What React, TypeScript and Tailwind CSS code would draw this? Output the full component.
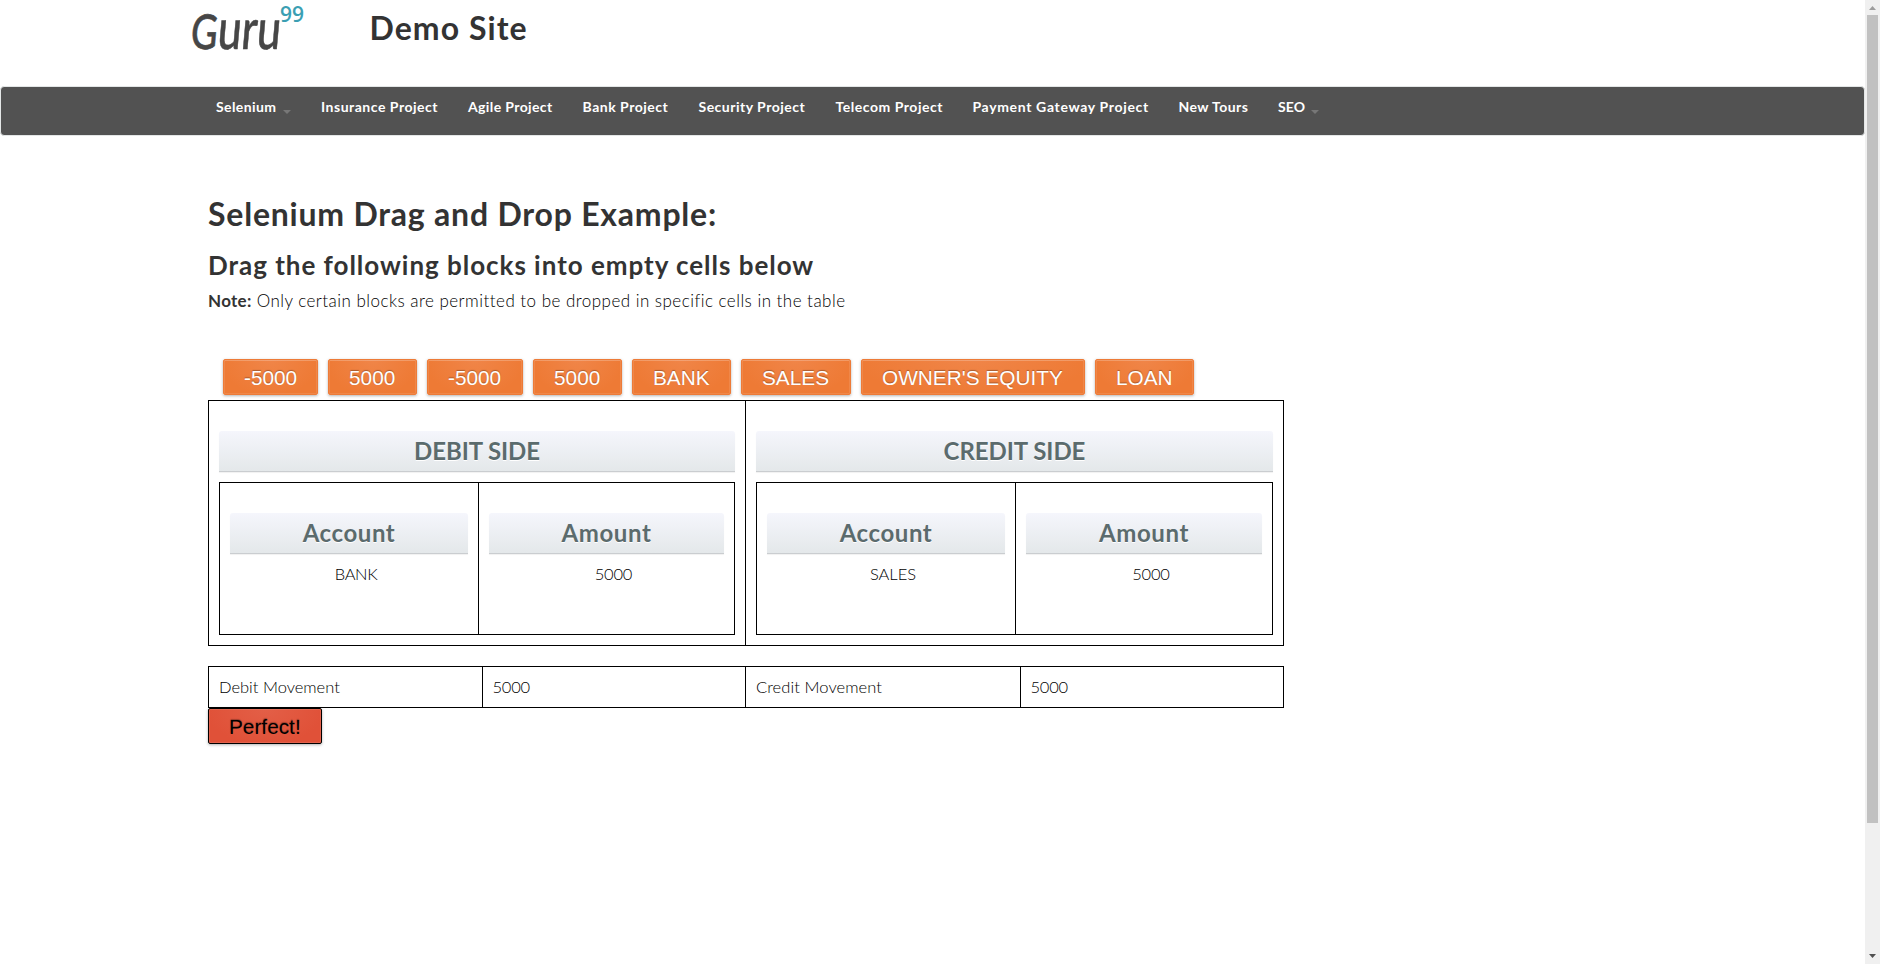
const navItems = [
  { label: "Selenium", box: "w-[75px] tracking-[0.41px]", menu: true },
  { label: "Insurance Project", box: "w-[117px] tracking-[0.52px]" },
  { label: "Agile Project", box: "w-[84.5px] tracking-[0.38px]" },
  { label: "Bank Project", box: "w-[86px] tracking-[0.52px]" },
  { label: "Security Project", box: "w-[107px] tracking-[0.49px]" },
  { label: "Telecom Project", box: "w-[107px] tracking-[0.53px]" },
  { label: "Payment Gateway Project", box: "w-[176px] tracking-[0.66px]" },
  { label: "New Tours", box: "w-[69.5px] tracking-[0.43px]" },
  { label: "SEO", box: "w-[41px] tracking-[0.1px]", menu: true },
];

const blocks = [
  { label: "-5000", width: "w-[95px]" },
  { label: "5000", width: "w-[89px]" },
  { label: "-5000", width: "w-[96px]" },
  { label: "5000", width: "w-[89px]" },
  { label: "BANK", width: "w-[99px]" },
  { label: "SALES", width: "w-[110px]" },
  { label: "OWNER'S EQUITY", width: "w-[224px]" },
  { label: "LOAN", width: "w-[99px]" },
];

function Caret() {
  return (
    <svg className="mt-[13px] shrink-0" width="8" height="4" viewBox="0 0 8 4">
      <path d="M0 0H8L4 4Z" fill="#777" />
    </svg>
  );
}

function Logo() {
  return (
    <svg width="136" height="80" viewBox="0 0 136 80" className="overflow-visible">
      <text
        transform="translate(0 48.5) skewX(-5) scale(0.76 1)"
        x="13"
        fill="#464646"
        stroke="#464646"
        strokeWidth="0.6"
        strokeLinejoin="round"
        fontFamily="Lato"
        fontWeight="500"
        fontSize="48"
      >
        G<tspan fontSize="56">uru</tspan>
      </text>
      <text x="100" y="22" fontSize="21" fontWeight="600" fontFamily="Open Sans" fill="#3b9fb3" textLength="24" lengthAdjust="spacingAndGlyphs">
        99
      </text>
    </svg>
  );
}

function Band({ children, tracking }: { children: string; tracking: string }) {
  return (
    <h3
      className={`h-[41px] rounded-t-[3px] border-b border-[#cacdd0] bg-linear-to-b from-[#f5f6fc] to-[#e4e8ea] text-center text-[24px] leading-[40px] font-bold text-[#5b6b6d] shadow-[0_1px_1px_rgba(0,0,0,0.06)] [text-shadow:0_1px_0_#fff] ${tracking}`}
    >
      {children}
    </h3>
  );
}

function Column({ title, tracking, value, valueTracking }: { title: string; tracking: string; value: string; valueTracking: string }) {
  return (
    <div className="px-[10px] pt-[30px]">
      <Band tracking={tracking}>{title}</Band>
      <div className={`mt-[10px] pl-[14px] text-center text-[16.5px] leading-5 font-light text-black ${valueTracking}`}>{value}</div>
    </div>
  );
}

function Side({ title, tracking, account, accountTracking, grid }: { title: string; tracking: string; account: string; accountTracking: string; grid: string }) {
  return (
    <div className="px-[10px] pt-[30px] pb-[10px]">
      <Band tracking={tracking}>{title}</Band>
      <div className={`mt-[10px] grid h-[153px] divide-x divide-black border border-black ${grid}`}>
        <Column title="Account" tracking="tracking-[0.56px]" value={account} valueTracking={accountTracking} />
        <Column title="Amount" tracking="tracking-[0.63px]" value="5000" valueTracking="tracking-[-0.2px]" />
      </div>
    </div>
  );
}

function Scrollbar() {
  return (
    <div className="flex h-full w-[15px] shrink-0 flex-col items-center bg-[#f0f0f0]">
      <svg width="15" height="15" viewBox="0 0 15 15">
        <path d="M4 10H11L7.5 6Z" fill="#9d9d9d" />
      </svg>
      <div className="h-[808px] w-[11px] bg-[#c1c1c1]" />
      <div className="flex-1" />
      <svg width="15" height="15" viewBox="0 0 15 15">
        <path d="M4 5H11L7.5 9Z" fill="#505050" />
      </svg>
    </div>
  );
}

export default function App() {
  return (
    <div className="flex h-[964px] overflow-hidden bg-white font-['Lato','Open_Sans',sans-serif] text-[#333]">
      <div className="flex-1">
        <header className="flex h-[86px] pl-[180px]">
          <Logo />
          <h1 className="ml-[53.5px] pt-[7.5px] text-[32px] leading-10 font-bold tracking-[1.05px]">Demo Site</h1>
        </header>

        <nav className="flex h-[50px] gap-[30px] rounded-[4px] border border-[#e3e6e6] bg-[#525252] pt-[10px] pl-[215px] text-[14px] leading-5 font-bold text-white">
          {navItems.map((item) => (
            <div key={item.label} className={`flex shrink-0 justify-between whitespace-nowrap ${item.box}`}>
              <span>{item.label}</span>
              {item.menu && <Caret />}
            </div>
          ))}
        </nav>

        <main className="pl-[208px]">
          <h1 className="pt-[58px] text-[32px] leading-10 font-bold tracking-[0.78px]">Selenium Drag and Drop Example:</h1>
          <h2 className="pt-[16px] text-[26px] leading-[30px] font-bold tracking-[0.97px]">
            Drag the following blocks into empty cells below
          </h2>
          <p className="pt-[11px] text-[17px] leading-5 font-light tracking-[0.47px] text-black">
            <b className="font-bold tracking-[0.3px] text-[#333]">Note:</b> Only certain blocks are permitted to be dropped in specific cells in the table
          </p>

          <div className="flex gap-[10px] pt-[48px] pl-[15px]">
            {blocks.map((block, i) => (
              <div
                key={i}
                className={`flex h-9 items-center rounded-[2px] border border-[#ed7b38] bg-[radial-gradient(ellipse_at_top,#f08548,#ee7a35_75%)] pt-px pl-[20px] font-['Liberation_Sans',Arial,sans-serif] text-[20.8px] leading-6 whitespace-nowrap text-white shadow-[inset_0_0_0_1px_rgba(255,255,255,0.1),inset_0_1px_0_rgba(255,255,255,0.15),0_1px_3px_rgba(0,0,0,0.3)] [text-shadow:0_-1px_1px_rgba(0,0,0,0.3)] ${block.width}`}
              >
                {block.label}
              </div>
            ))}
          </div>

          <section className="mt-[5px] grid h-[246px] w-[1076px] grid-cols-[537px_537px] divide-x divide-black border border-black">
            <Side title="DEBIT SIDE" tracking="tracking-[-0.1px]" account="BANK" accountTracking="tracking-[-0.4px]" grid="grid-cols-[259px_255px]" />
            <Side title="CREDIT SIDE" tracking="tracking-[-0.05px]" account="SALES" accountTracking="tracking-normal" grid="grid-cols-[259px_256px]" />
          </section>

          <section className="mt-5 grid h-[42px] w-[1076px] grid-cols-[274px_263px_275px_262px] divide-x divide-black border border-black text-[16.5px] leading-10 font-light text-black">
            <div className="pl-[10px]">Debit Movement</div>
            <div className="pl-[9.5px] tracking-[-0.2px]">5000</div>
            <div className="pl-[10px] tracking-[0.08px]">Credit Movement</div>
            <div className="pl-[9.5px] tracking-[-0.2px]">5000</div>
          </section>
          <button className="flex h-9 w-[114px] items-center rounded-[2px] border border-black bg-[radial-gradient(ellipse_at_top,#e35f47,#e05138_75%)] pt-px pl-[20px] font-['Liberation_Sans',Arial,sans-serif] text-[20.8px] leading-6 text-black shadow-[inset_0_0_0_1px_rgba(255,255,255,0.1),0_1px_3px_rgba(0,0,0,0.3)] [text-shadow:0_-1px_1px_rgba(0,0,0,0.3)]">
            Perfect!
          </button>
        </main>
      </div>
      <Scrollbar />
    </div>
  );
}
